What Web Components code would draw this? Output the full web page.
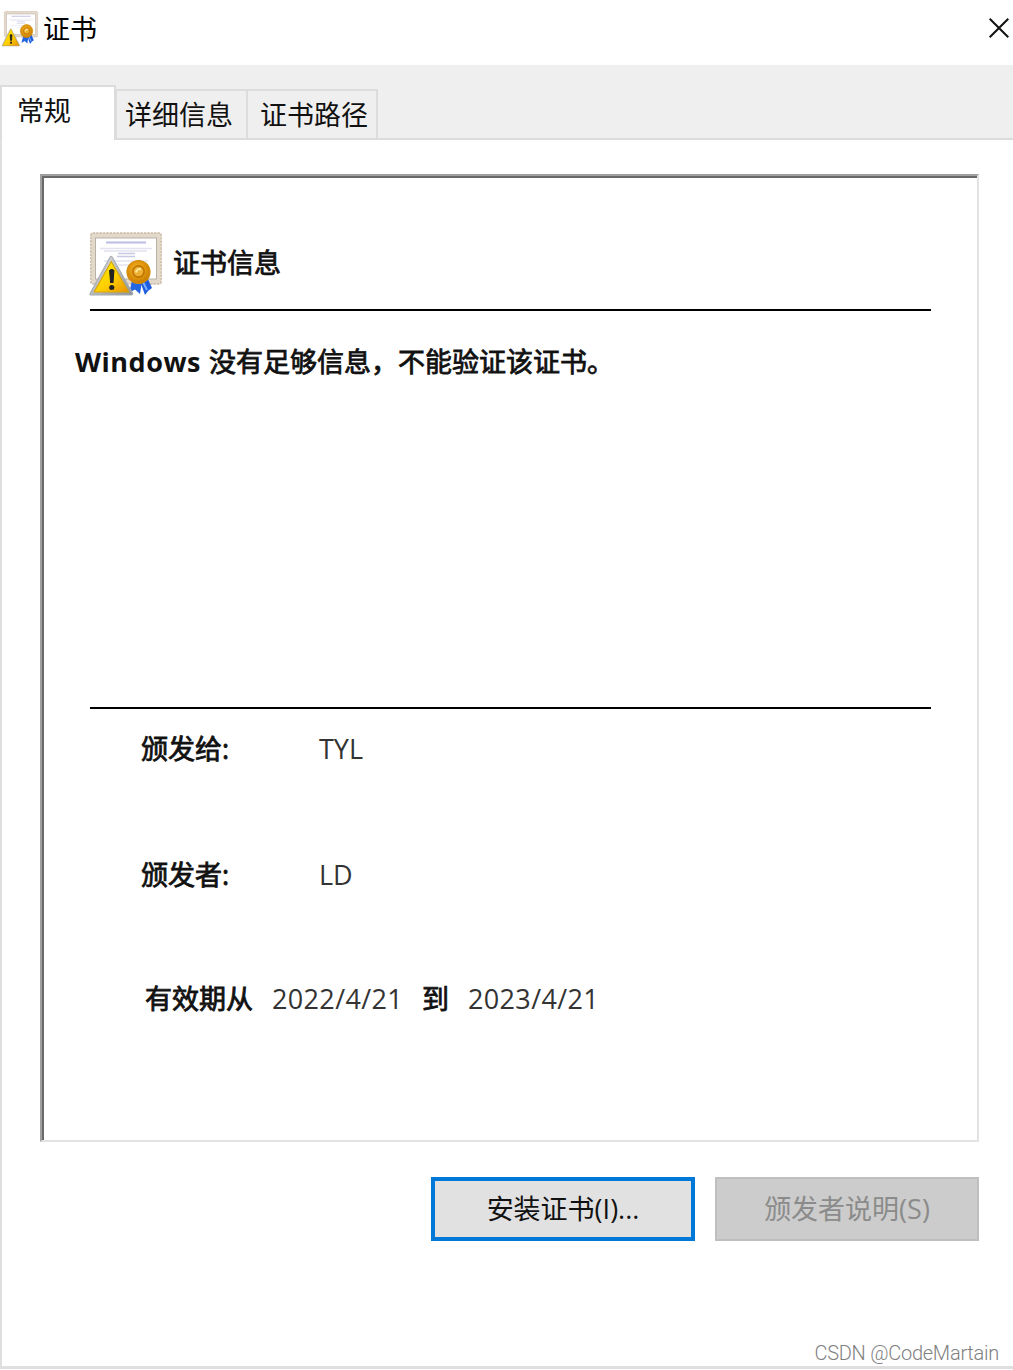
<!DOCTYPE html>
<html lang="zh-CN">
<head>
<meta charset="utf-8">
<title>证书</title>
<style>
  html, body {
    margin: 0;
    height: 100%;
    background: #fff;
    overflow: hidden;
  }

  body {
    font-family: "Open Sans", "Noto Sans CJK SC", sans-serif;
    font-size: 27px;
    line-height: 36px;
    color: #111;
    --strong-stroke: .8px #111;
  }

  b {
    margin-right: 1px;
    font-weight: 700;
    letter-spacing: .5px;
    -webkit-text-stroke: 0;
  }
</style>
</head>
<body>
<cert-dialog heading="证书">
  <cert-tab slot="tabs" selected>常规</cert-tab>
  <cert-tab slot="tabs">详细信息</cert-tab>
  <cert-tab slot="tabs">证书路径</cert-tab>

  <cert-panel heading="证书信息">
    <span slot="status"><b>Windows</b> 没有足够信息，不能验证该证书。</span>
    <cert-field label="颁发给:">TYL</cert-field>
    <cert-field label="颁发者:">LD</cert-field>
    <cert-validity from="2022/4/21" to="2023/4/21"></cert-validity>
  </cert-panel>

  <cert-button slot="actions" focused>安装证书(I)...</cert-button>
  <cert-button slot="actions" disabled>颁发者说明(S)</cert-button>
  <span slot="credit">CSDN @CodeMartain</span>
</cert-dialog>

<script>
class CertIcon extends HTMLElement {
  constructor() {
    super();
    this.attachShadow({ mode: 'open' });
  }

  connectedCallback() {
    const small = this.hasAttribute('small');
    const sign = small ? 'translate(-5 34) scale(.9)' : 'translate(-1 23) scale(1.03 1)';
    const seal = small ? 'translate(-7 -5) scale(1.13)' : '';

    this.shadowRoot.innerHTML = `
      <style>
        :host { display: block; flex: none; width: 72px; height: 64px; }
        :host([small]) { width: 34px; height: 33px; }
        svg { display: block; width: 100%; height: 100%; overflow: visible; }
      </style>
      <svg viewBox="0 0 72 ${small ? 66 : 64}" preserveAspectRatio="none" aria-hidden="true">
        <defs>
          <linearGradient id="sign" x1="0" y1="0" x2="1" y2="1">
            <stop offset="0" stop-color="#fff200"/>
            <stop offset=".55" stop-color="#ffd000"/>
            <stop offset="1" stop-color="#e89000"/>
          </linearGradient>
          <radialGradient id="seal" cx=".45" cy=".4" r=".6">
            <stop offset="0" stop-color="#ffdc6a"/>
            <stop offset=".4" stop-color="#e9a013"/>
            <stop offset="1" stop-color="#c97c00"/>
          </radialGradient>
          <linearGradient id="rim" x1="0" y1="0" x2="1" y2="1">
            <stop offset="0" stop-color="#e6e6e6"/>
            <stop offset="1" stop-color="#8c9299"/>
          </linearGradient>
        </defs>
        <rect x=".8" y="1" width="70.4" height="51" rx="2" fill="#e3d9cb" stroke="#cbbba5" stroke-width="1.4" stroke-dasharray="2.4 1"/>
        <rect x="5.5" y="6" width="61" height="41" fill="#fff" stroke="#b9b0a6" stroke-width="1"/>
        <g fill="none" stroke="#bcbce4" stroke-width="1.3">
          <path d="M16 10.5H56" stroke-width="1.8"/>
          <path d="M10 16.5H62M14 19H57" stroke="#e2e2f0"/>
          <path d="M28 21.5H45M27 24.5H45" stroke="#c8c8e4"/>
          <path d="M14 29H58M28 33H44" stroke="#e4e4f0"/>
        </g>
        <g transform="${seal}">
          <path d="M43 45L39 61L45 57.5L50 62L52 49Z" fill="#2465e2"/>
          <path d="M50 49L55 63L58 59L62 56L57 45Z" fill="#1d5ce0"/>
          <path d="M53 50L57 58" stroke="#78adff" stroke-width="2"/>
          <circle cx="48.5" cy="40" r="11.5" fill="url(#seal)" stroke="#d28c0b" stroke-width="1.2"/>
          <circle cx="48.5" cy="39.5" r="5.6" fill="#eeb033" stroke="#bd7300" stroke-width="1.6"/>
          <path d="M46 40.5Q47 36 51 37.5" fill="none" stroke="#ffe9a0" stroke-width="2"/>
        </g>
        <g transform="${sign}">
          <path d="M22.5 2L42.5 38.5Q42.5 40 41 40H2Q.5 40 1 38.5L20.5 2Q21.5 .6 22.5 2Z" fill="url(#rim)" stroke="#a5aaae" stroke-width="1"/>
          <path d="M21.6 ${small ? 3 : 6.5}L${small ? '41 39H2.5' : '38.5 37H5'}Z" fill="url(#sign)" stroke="#d9a500" stroke-width="1"/>
          <path d="M20 15.5Q22 13.5 24.2 15.5L23.3 27.5H21Z" fill="#222" stroke="#222" stroke-width="${small ? 2 : 1}"/>
          <circle cx="22.1" cy="32.5" r="2.5" fill="#222"/>
        </g>
      </svg>
    `;
  }
}

class CertTab extends HTMLElement {
  constructor() {
    super();
    this.attachShadow({ mode: 'open' });
    this.shadowRoot.innerHTML = `
      <style>
        :host {
          display: block;
          box-sizing: border-box;
          width: 133px;
          height: 51px;
          padding: 6px 0 0 8px;
          margin-left: -2px;
          border: 2px solid #dcdcdc;
          white-space: nowrap;
        }
        :host(:nth-child(3)) { width: 132px; padding-left: 12px; }
        :host([selected]) {
          width: 116px;
          height: 55px;
          margin: 0 1px 0 0;
          padding: 6px 0 0 15px;
          border-bottom: 0;
          background: #fff;
        }
      </style>
      <slot></slot>
    `;
  }
}

class CertButton extends HTMLElement {
  constructor() {
    super();
    this.attachShadow({ mode: 'open' });
    this.shadowRoot.innerHTML = `
      <style>
        :host {
          display: flex;
          box-sizing: border-box;
          justify-content: center;
          align-items: center;
          width: 264px;
          height: 64px;
          border: 2px solid #bfbfbf;
          background: #e1e1e1;
          white-space: nowrap;
          cursor: default;
        }
        :host([focused]) { border: 4px solid #0078d7; }
        :host([disabled]) { background: #ccc; color: #8b8b8b; }
      </style>
      <slot></slot>
    `;
  }

  connectedCallback() {
    this.setAttribute('role', 'button');
  }
}

class CertField extends HTMLElement {
  constructor() {
    super();
    this.attachShadow({ mode: 'open' });
  }

  connectedCallback() {
    this.shadowRoot.innerHTML = `
      <style>
        :host {
          display: grid;
          grid-template-columns: 178px 1fr;
          height: 36px;
        }
        .label { -webkit-text-stroke: var(--strong-stroke); }
        .value { color: #333; }
      </style>
      <span class="label">${this.getAttribute('label')}</span>
      <span class="value"><slot></slot></span>
    `;
  }
}

class CertValidity extends HTMLElement {
  constructor() {
    super();
    this.attachShadow({ mode: 'open' });
  }

  connectedCallback() {
    this.shadowRoot.innerHTML = `
      <style>
        :host { display: flex; gap: 19px; height: 36px; }
        .label { -webkit-text-stroke: var(--strong-stroke); }
        .date { color: #333; width: 131px; letter-spacing: .35px; }
      </style>
      <span class="label">有效期从</span>
      <span class="date">${this.getAttribute('from')}</span>
      <span class="label">到</span>
      <span class="date">${this.getAttribute('to')}</span>
    `;
  }
}

class CertPanel extends HTMLElement {
  constructor() {
    super();
    this.attachShadow({ mode: 'open' });
  }

  connectedCallback() {
    this.shadowRoot.innerHTML = `
      <style>
        :host {
          display: block;
          box-sizing: border-box;
          height: 968px;
          border: 2px solid #a0a0a0;
          border-right-color: #e3e3e3;
          border-bottom-color: #e3e3e3;
        }
        .inner {
          box-sizing: border-box;
          height: 100%;
          padding: 54px 46px 0 46px;
          border-left: 2px solid #696969;
          border-top: 2px solid #696969;
        }
        header { display: flex; gap: 11px; height: 77px; }
        h1 {
          margin: 13px 0 0;
          font: inherit;
          -webkit-text-stroke: var(--strong-stroke);
        }
        hr { margin: 0; border: 0; height: 2px; background: #000; }
        .status {
          box-sizing: border-box;
          height: 396px;
          margin-left: -15px;
          padding-top: 33px;
          -webkit-text-stroke: var(--strong-stroke);
          white-space: nowrap;
        }
        .fields {
          display: flex;
          flex-direction: column;
          gap: 90px;
          padding: 22px 0 0 51px;
        }
        ::slotted(cert-validity) { margin: -2px 0 0 4px; }
      </style>
      <div class="inner">
        <header>
          <cert-icon></cert-icon>
          <h1>${this.getAttribute('heading')}</h1>
        </header>
        <hr>
        <div class="status"><slot name="status"></slot></div>
        <hr>
        <div class="fields"><slot></slot></div>
      </div>
    `;
  }
}

class CertDialog extends HTMLElement {
  constructor() {
    super();
    this.attachShadow({ mode: 'open' });
  }

  connectedCallback() {
    this.shadowRoot.innerHTML = `
      <style>
        :host {
          display: flex;
          flex-direction: column;
          width: 1013px;
          height: 1370px;
        }
        .titlebar {
          display: flex;
          box-sizing: border-box;
          height: 65px;
          padding: 11px 4px 0 4px;
          color: #000;
        }
        .title { flex: 1; margin-left: 5px; }
        .close { width: 20px; height: 20px; margin-top: 7px; }
        .tabs {
          display: flex;
          align-items: flex-end;
          box-sizing: border-box;
          height: 75px;
          background: #efefef;
          box-shadow: inset 0 -2px #dcdcdc;
        }
        .page {
          box-sizing: border-box;
          height: 1229px;
          padding: 34px 34px 0 38px;
          border-left: 2px solid #dfdfdf;
          border-bottom: 3px solid #dfdfdf;
        }
        .actions {
          display: flex;
          justify-content: flex-end;
          gap: 20px;
          margin-top: 35px;
        }
        .credit {
          margin: 100px -20px 0 0;
          text-align: right;
          font: 300 20px/24px Roboto, sans-serif;
          letter-spacing: -.25px;
          color: #808080;
        }
      </style>
      <div class="titlebar">
        <cert-icon small></cert-icon>
        <span class="title">${this.getAttribute('heading')}</span>
        <svg class="close" viewBox="0 0 20 20" role="button">
          <path d="M.7 .7L19.3 19.3M19.3 .7L.7 19.3" fill="none" stroke="#111" stroke-width="2"/>
        </svg>
      </div>
      <div class="tabs"><slot name="tabs"></slot></div>
      <div class="page">
        <slot></slot>
        <div class="actions"><slot name="actions"></slot></div>
        <div class="credit"><slot name="credit"></slot></div>
      </div>
    `;
  }
}

customElements.define('cert-icon', CertIcon);
customElements.define('cert-tab', CertTab);
customElements.define('cert-button', CertButton);
customElements.define('cert-field', CertField);
customElements.define('cert-validity', CertValidity);
customElements.define('cert-panel', CertPanel);
customElements.define('cert-dialog', CertDialog);
</script>
</body>
</html>
